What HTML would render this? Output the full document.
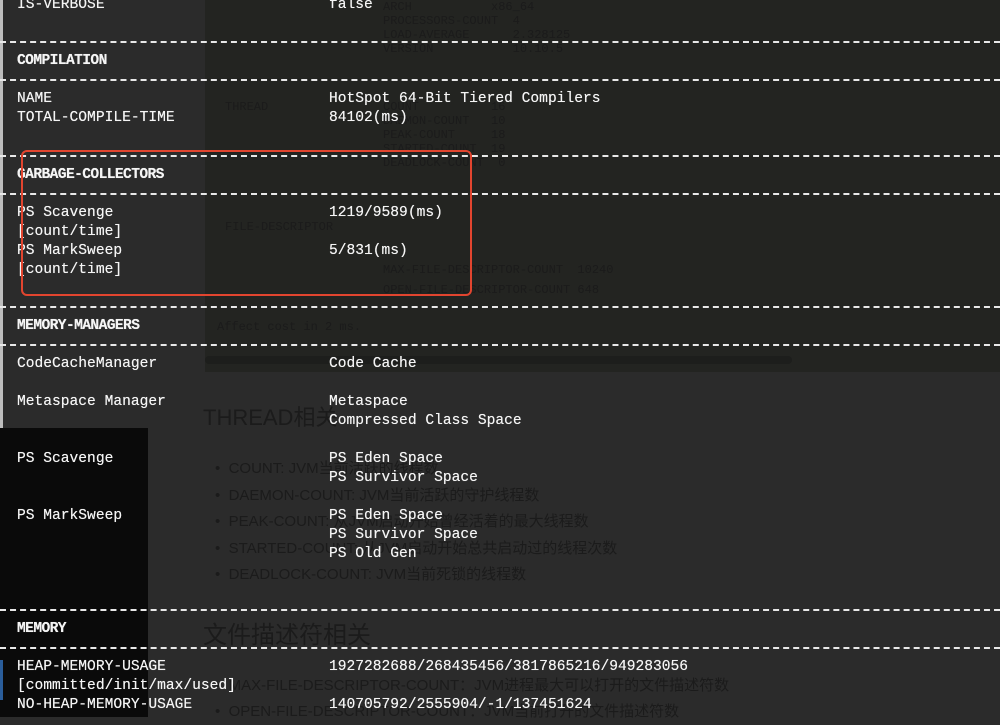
<!DOCTYPE html>
<html><head><meta charset="utf-8"><style>
*{margin:0;padding:0}
body{width:1000px;height:717px;overflow:hidden;background:#2b2b2b;position:relative;font-family:"Liberation Mono",monospace}
.t{position:absolute;color:#f5f5f5;font-size:14.6px;line-height:19px;white-space:pre;text-shadow:0 0 0.4px #fff}
.b{font-weight:bold;letter-spacing:-0.6px}
.d{position:absolute;left:0;width:1000px;height:0;border-top:2px dashed #e8e8e8}
.bg{position:absolute;color:#1b1b1b;font-size:12px;white-space:pre;font-family:"Liberation Mono",monospace}
.cj{position:absolute;color:#1b1b1b;font-family:"Liberation Sans","Noto Sans CJK SC",sans-serif;white-space:pre}
</style></head><body>
<div style="position:absolute;left:205px;top:0;width:795px;height:372px;background:#232421"></div>
<div style="position:absolute;left:205px;top:356px;width:587px;height:8px;background:#1d1e1c;border-radius:4px"></div>
<div style="position:absolute;left:0;top:0;width:3px;height:428px;background:#bdbdbd"></div>
<div style="position:absolute;left:0;top:428px;width:148px;height:289px;background:#0a0a0a"></div>
<div style="position:absolute;left:0;top:660px;width:3px;height:40px;background:#2a5d9a"></div>

<div class="bg" style="left:383px;top:0">ARCH           x86_64
PROCESSORS-COUNT  4
LOAD-AVERAGE      2.328125
VERSION           10.10.5</div>
<div class="bg" style="left:225px;top:100px">THREAD</div>
<div class="bg" style="left:383px;top:100px">COUNT          16
DAEMON-COUNT   10
PEAK-COUNT     18
STARTED-COUNT  19
DEADLOCK-COUNT  0</div>
<div class="bg" style="left:225px;top:220px">FILE-DESCRIPTOR</div>
<div class="bg" style="left:383px;top:260px;line-height:20px">MAX-FILE-DESCRIPTOR-COUNT  10240
OPEN-FILE-DESCRIPTOR-COUNT 648</div>
<div class="bg" style="left:217px;top:320px">Affect cost in 2 ms.</div>
<div class="cj" style="left:203px;top:400px;font-size:22px">THREAD相关</div>
<div class="cj" style="left:215px;top:456px;font-size:15px;line-height:26.5px">•  COUNT: JVM当前活跃的线程数
•  DAEMON-COUNT: JVM当前活跃的守护线程数
•  PEAK-COUNT: 从JVM启动开始曾经活着的最大线程数
•  STARTED-COUNT: 从JVM启动开始总共启动过的线程次数
•  DEADLOCK-COUNT: JVM当前死锁的线程数</div>
<div class="cj" style="left:203px;top:615px;font-size:24px">文件描述符相关</div>
<div class="cj" style="left:215px;top:673px;font-size:15px;line-height:26px">•  MAX-FILE-DESCRIPTOR-COUNT：JVM进程最大可以打开的文件描述符数
•  OPEN-FILE-DESCRIPTOR-COUNT：JVM当前打开的文件描述符数</div>

<div class="d" style="top:41px"></div>
<div class="d" style="top:79px"></div>
<div class="d" style="top:155px"></div>
<div class="d" style="top:193px"></div>
<div class="d" style="top:306px"></div>
<div class="d" style="top:344px"></div>
<div class="d" style="top:609px"></div>
<div class="d" style="top:647px"></div>

<div class="t" style="left:17px;top:-4px">IS-VERBOSE</div><div class="t" style="left:329px;top:-4px">false</div>
<div class="t b" style="left:17px;top:52px">COMPILATION</div>
<div class="t" style="left:17px;top:90px">NAME
TOTAL-COMPILE-TIME</div>
<div class="t" style="left:329px;top:90px">HotSpot 64-Bit Tiered Compilers
84102(ms)</div>
<div class="t b" style="left:17px;top:166px">GARBAGE-COLLECTORS</div>
<div class="t" style="left:17px;top:204px">PS Scavenge
[count/time]
PS MarkSweep
[count/time]</div>
<div class="t" style="left:329px;top:204px">1219/9589(ms)

5/831(ms)</div>
<div class="t b" style="left:17px;top:317px">MEMORY-MANAGERS</div>
<div class="t" style="left:17px;top:355px">CodeCacheManager</div>
<div class="t" style="left:329px;top:355px">Code Cache</div>
<div class="t" style="left:17px;top:393px">Metaspace Manager</div>
<div class="t" style="left:329px;top:393px">Metaspace
Compressed Class Space</div>
<div class="t" style="left:17px;top:450px">PS Scavenge</div>
<div class="t" style="left:329px;top:450px">PS Eden Space
PS Survivor Space</div>
<div class="t" style="left:17px;top:507px">PS MarkSweep</div>
<div class="t" style="left:329px;top:507px">PS Eden Space
PS Survivor Space
PS Old Gen</div>
<div class="t b" style="left:17px;top:620px">MEMORY</div>
<div class="t" style="left:17px;top:658px">HEAP-MEMORY-USAGE
[committed/init/max/used]
NO-HEAP-MEMORY-USAGE</div>
<div class="t" style="left:329px;top:658px">1927282688/268435456/3817865216/949283056

140705792/2555904/-1/137451624</div>

<div style="position:absolute;left:21px;top:150px;width:447px;height:142px;border:2px solid #e2452f;border-radius:6px"></div>
</body></html>
